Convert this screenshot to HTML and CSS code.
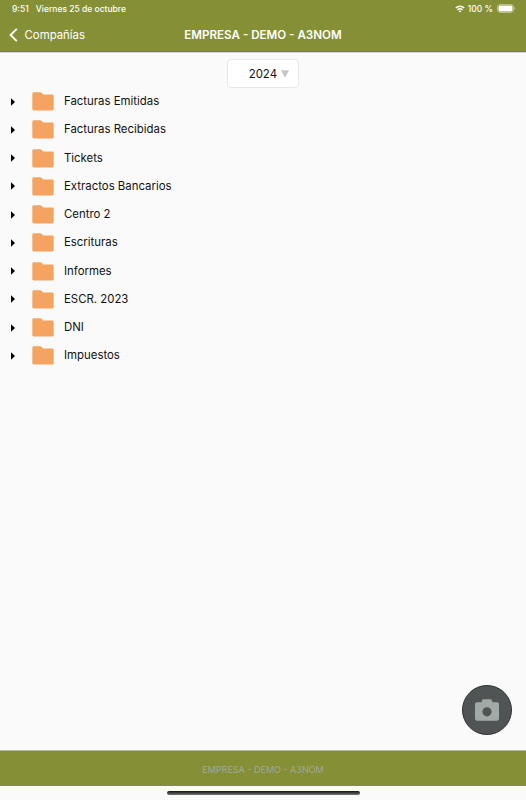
FILE: index.html
```html
<!DOCTYPE html>
<html lang="es">
<head>
  <meta charset="UTF-8">
  <title>EMPRESA - DEMO - A3NOM</title>
  <link rel="stylesheet" href="styles.css">
</head>
<body>

  <svg class="hidden">
    <symbol id="carpeta" viewBox="0 0 22 19">
      <path d="M2 0.3H8.3C9 0.3 9.3 0.6 9.8 1.1L11.3 2.5H20C21.1 2.5 21.7 3.1 21.7 4.2V16.8C21.7 18 21.1 18.6 20 18.6H2C0.9 18.6 0.3 18 0.3 16.8V2C0.3 0.9 0.9 0.3 2 0.3Z"/>
    </symbol>
    <symbol id="flecha" viewBox="0 0 4 8">
      <path d="M0 0.3L4 4L0 7.7Z"/>
    </symbol>
  </svg>

  <header class="cabecera">
    <div class="estado">
      <span class="hora">9:51</span>
      <span class="fecha">Viernes 25 de octubre</span>
      <svg class="wifi" viewBox="0 0 10 8">
        <path d="M0.8 3.1C3.1 0.7 6.9 0.7 9.2 3.1M2.5 4.9C3.9 3.5 6.1 3.5 7.5 4.9" fill="none" stroke="#fff" stroke-width="1.4"/>
        <path d="M3.6 6.1C4.4 5.4 5.6 5.4 6.4 6.1L5 7.6Z" fill="#fff"/>
      </svg>
      <span class="porcentaje">100 %</span>
      <svg class="bateria" viewBox="0 0 19 9">
        <rect x="0.5" y="0.5" width="16" height="8" rx="2.4" fill="none" stroke="#b9bf85"/>
        <rect x="1.5" y="1.5" width="14" height="6" rx="1.4" fill="#fff"/>
        <path d="M17.4 3C18.8 3.5 18.8 5.5 17.4 6Z" fill="#b9bf85"/>
      </svg>
    </div>
    <div class="barra">
      <a class="volver">
        <svg class="atras" viewBox="0 0 9 14">
          <path d="M7.8 0.9L1.6 7L7.8 13.1" fill="none" stroke="#fff" stroke-width="1.9"/>
        </svg>
        Compañías
      </a>
      <h1 class="titulo">EMPRESA - DEMO - A3NOM</h1>
    </div>
  </header>

  <main class="contenido">
    <div class="anio">
      <span>2024</span>
      <svg class="desplegar" viewBox="0 0 8 8"><path d="M0 0.3H8L4 7.7Z"/></svg>
    </div>

    <ul class="carpetas">
      <li><svg class="flecha"><use href="#flecha"/></svg><svg class="carpeta"><use href="#carpeta"/></svg><span>Facturas Emitidas</span></li>
      <li><svg class="flecha"><use href="#flecha"/></svg><svg class="carpeta"><use href="#carpeta"/></svg><span>Facturas Recibidas</span></li>
      <li><svg class="flecha"><use href="#flecha"/></svg><svg class="carpeta"><use href="#carpeta"/></svg><span>Tickets</span></li>
      <li><svg class="flecha"><use href="#flecha"/></svg><svg class="carpeta"><use href="#carpeta"/></svg><span>Extractos Bancarios</span></li>
      <li><svg class="flecha"><use href="#flecha"/></svg><svg class="carpeta"><use href="#carpeta"/></svg><span>Centro 2</span></li>
      <li><svg class="flecha"><use href="#flecha"/></svg><svg class="carpeta"><use href="#carpeta"/></svg><span>Escrituras</span></li>
      <li><svg class="flecha"><use href="#flecha"/></svg><svg class="carpeta"><use href="#carpeta"/></svg><span>Informes</span></li>
      <li><svg class="flecha"><use href="#flecha"/></svg><svg class="carpeta"><use href="#carpeta"/></svg><span>ESCR. 2023</span></li>
      <li><svg class="flecha"><use href="#flecha"/></svg><svg class="carpeta"><use href="#carpeta"/></svg><span>DNI</span></li>
      <li><svg class="flecha"><use href="#flecha"/></svg><svg class="carpeta"><use href="#carpeta"/></svg><span>Impuestos</span></li>
    </ul>

    <button class="camara" aria-label="Cámara">
      <svg viewBox="0 0 24 22">
        <path fill-rule="evenodd" d="M9 0.3H15C16.2 0.3 16.7 0.8 17 1.7L17.6 3.3H21.8C23.2 3.3 24 4.1 24 5.5V19.5C24 20.9 23.2 21.7 21.8 21.7H2.2C0.8 21.7 0 20.9 0 19.5V5.5C0 4.1 0.8 3.3 2.2 3.3H6.4L7 1.7C7.3 0.8 7.8 0.3 9 0.3ZM12 8.2A4.6 4.6 0 1 0 12 17.4A4.6 4.6 0 1 0 12 8.2Z"/>
      </svg>
    </button>
  </main>

  <footer class="pie">EMPRESA - DEMO - A3NOM</footer>
  <div class="inicio"><span class="inicio-barra"></span></div>

</body>
</html>
```
FILE: styles.css
```css
* {
  box-sizing: border-box;
}

body {
  display: flex;
  flex-direction: column;
  height: 800px;
  margin: 0;
  background-color: #fafafa;
  color: #111;
  font-family: Inter, "Liberation Sans", sans-serif;
  font-size: 11.4px;
}

svg {
  display: block;
  flex: none;
}

.hidden {
  display: none;
}

.cabecera {
  height: 52px;
  background-color: #858f35;
  border-bottom: 1px solid #7b8420;
  box-shadow: 0 1px 0 #d5d6ca;
  color: #fff;
}

.estado {
  display: flex;
  align-items: center;
  height: 17px;
  padding: 0 10px 0 12px;
  font-size: 8.5px;
  font-weight: 500;
}

.fecha {
  margin-left: 7px;
}

.wifi {
  width: 10px;
  height: 8px;
  margin-left: auto;
}

.porcentaje {
  margin: 0 4px 0 3px;
}

.bateria {
  width: 19px;
  height: 9px;
}

.barra {
  display: grid;
  grid-template-columns: 1fr auto 1fr;
  align-items: center;
  height: 35px;
}

.volver {
  display: flex;
  align-items: center;
  padding-left: 9px;
}

.atras {
  width: 9px;
  height: 14px;
  margin-right: 6.5px;
}

.titulo {
  margin: 0;
  font-size: 11.6px;
  font-weight: 600;
}

.contenido {
  flex: 1;
  position: relative;
  padding-top: 7px;
}

.anio {
  display: flex;
  align-items: center;
  justify-content: flex-end;
  width: 72px;
  height: 29px;
  margin: 0 auto;
  padding-right: 9px;
  background-color: #fff;
  border: 1px solid #e8e8e8;
  border-radius: 4px;
}

.desplegar {
  width: 8px;
  height: 8px;
  margin-left: 4px;
  fill: #c5c5c5;
}

.carpetas {
  margin: -0.5px 0 0;
  padding: 0;
  list-style: none;
}

.carpetas li {
  display: flex;
  align-items: center;
  height: 28.25px;
  padding-left: 10.5px;
}

.carpetas span {
  padding-bottom: 1px;
}

.flecha {
  width: 4px;
  height: 8px;
  margin-right: 17.5px;
  fill: #000;
}

.carpeta {
  width: 22px;
  height: 19px;
  margin-right: 10px;
  fill: #f4a460;
}

.camara {
  position: absolute;
  right: 14px;
  bottom: 15px;
  display: flex;
  align-items: center;
  justify-content: center;
  width: 50px;
  height: 50px;
  padding: 0;
  background-color: #505454;
  border: 1px solid #303333;
  border-radius: 50%;
}

.camara svg {
  width: 24px;
  height: 22px;
  fill: #a2aaa8;
}

.pie {
  display: flex;
  align-items: center;
  justify-content: center;
  height: 36px;
  padding-top: 1px;
  background-color: #858f35;
  border-top: 1px solid #b9bca0;
  color: #a3a79b;
  font-size: 9px;
}

.inicio {
  height: 14px;
  padding-top: 5px;
}

.inicio-barra {
  display: block;
  width: 193px;
  height: 4px;
  margin: 0 auto;
  background: linear-gradient(#111, #777);
  border-radius: 2px;
}
```
